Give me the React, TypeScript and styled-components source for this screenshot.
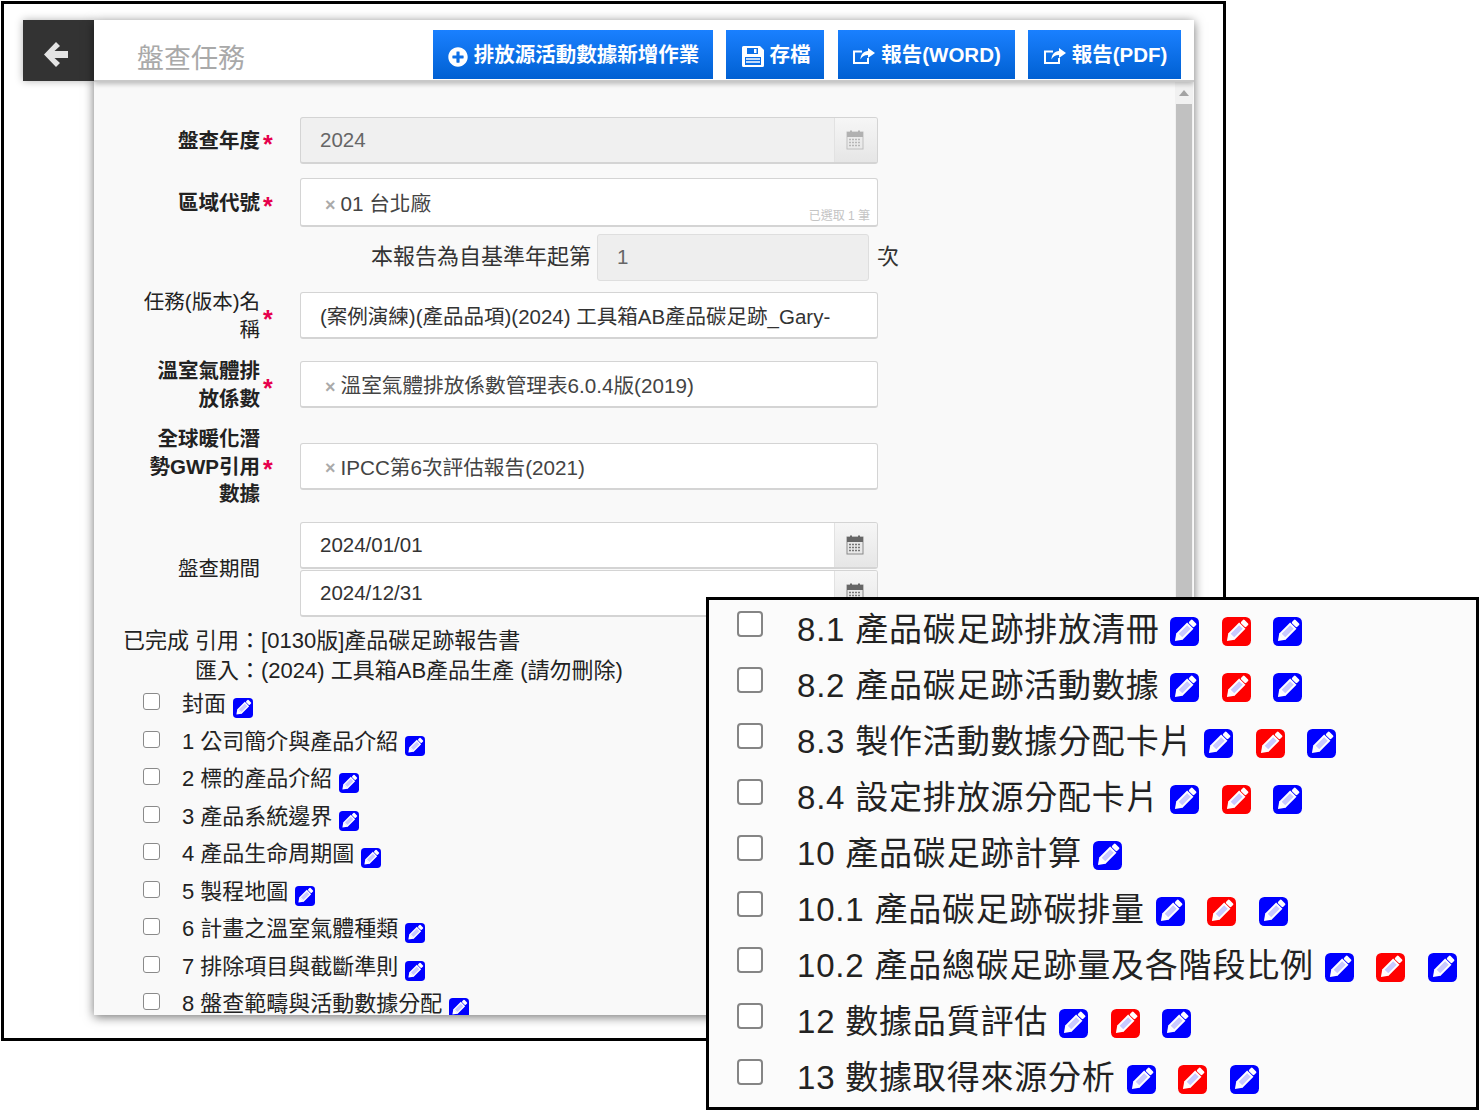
import { FaPlusCircle } from 'react-icons/fa';
import styled, { createGlobalStyle } from 'styled-components';

const GlobalStyle = createGlobalStyle`
html, body {
    margin: 0;
    padding: 0;
    background: #fff;
    font-family: "Liberation Sans", "Noto Sans CJK TC", sans-serif;
}
* { box-sizing: border-box; }
`

const PencilBox = ({ size, color = '#0000ff' }: { size: number; color?: string }) => (
    <Pencil $size={size} viewBox="0 0 24 24">
        <rect width="24" height="24" rx="4.5" fill={color} />
        <g transform="rotate(45 12 12)">
            <rect x="9" y="0.5" width="6" height="4" rx="1" fill="#fff" />
            <rect x="9.1" y="6" width="5.8" height="11.5" fill="#c9c9ff" stroke="#fff" strokeWidth="1.6" />
            <path d="M8.3 18h7.4l-3.7 5.2z" fill="#fff" />
        </g>
    </Pencil>
)

const CalendarIcon = ({ faded }: { faded?: boolean }) => (
    <svg width="18" height="20" viewBox="0 0 18 20" opacity={faded ? 0.45 : 1}>
        <rect x="1" y="2" width="16" height="17" fill="#e8e8e8" stroke="#8a8a8a" />
        <rect x="1" y="2" width="16" height="5" fill="#666" />
        <rect x="4" y="0.5" width="2" height="3" fill="#666" />
        <rect x="12" y="0.5" width="2" height="3" fill="#666" />
        <path d="M3 9.5h12M3 12.5h12M3 15.5h12" stroke="#777" strokeWidth="1.6" strokeDasharray="2 1" />
    </svg>
)

const BackArrow = () => (
    <svg width="24" height="25" viewBox="0 0 24 25">
        <path d="M12 0l4 4-5.5 5H24v7H10.500l5.500 5-4 4L0 12.500z" fill="#e4e4e4" />
    </svg>
)

const SaveIcon = () => (
    <ButtonGlyph width="22" height="21" viewBox="0 0 22 21">
        <path d="M0 1.500A1.500 1.500 0 0 1 1.500 0H18l4 4v15.500a1.500 1.500 0 0 1-1.500 1.500h-19A1.500 1.500 0 0 1 0 19.500z" fill="#fff" />
        <rect x="5" y="2" width="11" height="6" fill="#0a6fe8" />
        <rect x="12" y="3" width="2.500" height="4" fill="#fff" />
        <rect x="3" y="11" width="16" height="8" fill="#0a6fe8" />
        <path d="M4 13h14M4 16h14" stroke="#fff" strokeWidth="1.500" />
    </ButtonGlyph>
)

const ShareIcon = () => (
    <ButtonGlyph width="22" height="16" viewBox="0 0 22 16">
        <path d="M9 3.500H1V15h14V10" fill="none" stroke="#fff" strokeWidth="2" />
        <path d="M15 0l7 5-7 5V7c-4 0-6 1.500-7.500 4.500C7.500 6.500 10.500 3.500 15 3z" fill="#fff" />
    </ButtonGlyph>
)

const mainItems = [
    '封面',
    '1 公司簡介與產品介紹',
    '2 標的產品介紹',
    '3 產品系統邊界',
    '4 產品生命周期圖',
    '5 製程地圖',
    '6 計畫之溫室氣體種類',
    '7 排除項目與截斷準則',
    '8 盤查範疇與活動數據分配',
]

const zoomItems = [
    { text: '8.1 產品碳足跡排放清冊', full: true },
    { text: '8.2 產品碳足跡活動數據', full: true },
    { text: '8.3 製作活動數據分配卡片', full: true },
    { text: '8.4 設定排放源分配卡片', full: true },
    { text: '10 產品碳足跡計算', full: false },
    { text: '10.1 產品碳足跡碳排量', full: true },
    { text: '10.2 產品總碳足跡量及各階段比例', full: true },
    { text: '12 數據品質評估', full: true },
    { text: '13 數據取得來源分析', full: true },
]

const App = () => {
    return (
        <Page>
            <GlobalStyle />
            <Frame>
                <BackButton><BackArrow /></BackButton>
                <Panel>
                    <Header>
                        <Title>盤查任務</Title>
                        <Toolbar>
                            <ToolButton $width={280}><PlusGlyph><FaPlusCircle /></PlusGlyph>排放源活動數據新增作業</ToolButton>
                            <ToolButton $width={98}><SaveIcon />存檔</ToolButton>
                            <ToolButton $width={177}><ShareIcon />報告(WORD)</ToolButton>
                            <ToolButton $width={153}><ShareIcon />報告(PDF)</ToolButton>
                        </Toolbar>
                    </Header>
                    <Body>
                        <Content>
                            <FormRow $top={35}>
                                <Label>盤查年度</Label>
                                <Star>*</Star>
                                <Field $disabled>
                                    <FieldText $muted>2024</FieldText>
                                    <AddOn><CalendarIcon faded /></AddOn>
                                </Field>
                            </FormRow>
                            <FormRow $top={14}>
                                <Label>區域代號</Label>
                                <Star>*</Star>
                                <Field $height={49}>
                                    <Chip><ChipX>×</ChipX>01 台北廠</Chip>
                                    <Counter>已選取 1 筆</Counter>
                                </Field>
                            </FormRow>
                            <BaseYearRow>
                                <BaseYearLabel>本報告為自基準年起第</BaseYearLabel>
                                <BaseYearInput>1</BaseYearInput>
                                <BaseYearUnit>次</BaseYearUnit>
                            </BaseYearRow>
                            <FormRow $top={7}>
                                <Label $plain>任務(版本)名<br />稱</Label>
                                <Star>*</Star>
                                <Field>
                                    <FieldText $clip>(案例演練)(產品品項)(2024) 工具箱AB產品碳足跡_Gary-</FieldText>
                                </Field>
                            </FormRow>
                            <FormRow $top={14}>
                                <Label>溫室氣體排<br />放係數</Label>
                                <Star>*</Star>
                                <Field>
                                    <Chip><ChipX>×</ChipX>溫室氣體排放係數管理表6.0.4版(2019)</Chip>
                                </Field>
                            </FormRow>
                            <FormRow $top={13}>
                                <Label>全球暖化潛<br />勢GWP引用<br />數據</Label>
                                <Star>*</Star>
                                <Field>
                                    <Chip><ChipX>×</ChipX>IPCC第6次評估報告(2021)</Chip>
                                </Field>
                            </FormRow>
                            <FormRow $top={14}>
                                <Label $plain>盤查期間</Label>
                                <Star />
                                <DateStack>
                                    <Field>
                                        <FieldText>2024/01/01</FieldText>
                                        <AddOn><CalendarIcon /></AddOn>
                                    </Field>
                                    <Field>
                                        <FieldText>2024/12/31</FieldText>
                                        <AddOn><CalendarIcon /></AddOn>
                                    </Field>
                                </DateStack>
                            </FormRow>
                            <Notes>
                                <Note $indent={29}>已完成 引用：[0130版]產品碳足跡報告書</Note>
                                <Note $indent={101}>匯入：(2024) 工具箱AB產品生產 (請勿刪除)</Note>
                            </Notes>
                            <CheckList>
                                {mainItems.map((item) => (
                                    <CheckRow key={item}>
                                        <SmallCheck type="checkbox" />
                                        <RowText>{item}</RowText>
                                        <PencilBox size={20} />
                                    </CheckRow>
                                ))}
                            </CheckList>
                        </Content>
                        <ScrollBar>
                            <ScrollArrow />
                            <ScrollThumb />
                        </ScrollBar>
                    </Body>
                </Panel>
            </Frame>
            <ZoomBox>
                {zoomItems.map((item) => (
                    <ZoomRow key={item.text}>
                        <BigCheck type="checkbox" />
                        <ZoomText>{item.text}</ZoomText>
                        <PencilBox size={29} />
                        {item.full && <PencilBox size={29} color="#ff0000" />}
                        {item.full && <PencilBox size={29} />}
                    </ZoomRow>
                ))}
            </ZoomBox>
        </Page>
    )
}

export default App;

const Page = styled.div`
position: relative;
width: 1480px;
height: 1111px;
overflow: hidden;
padding: 1px 0 0 1px;
`
const Frame = styled.div`
display: flex;
align-items: flex-start;
width: 1225px;
height: 1040px;
padding: 16px 0 0 19px;
border: 3px solid #000;
background: #fff;
`
const BackButton = styled.div`
display: flex;
align-items: center;
justify-content: center;
flex: none;
width: 71px;
height: 61px;
padding: 7px 5px 0 0;
background: #333;
box-shadow: 0 0 8px rgba(0, 0, 0, 0.3);
`
const Panel = styled.div`
display: flex;
flex-direction: column;
width: 1100px;
height: 995px;
overflow: hidden;
background: #f9f9f9;
box-shadow: 0 2px 10px rgba(0, 0, 0, 0.55);
`
const Header = styled.div`
display: flex;
flex: none;
align-items: flex-start;
justify-content: space-between;
height: 62px;
padding: 10px 13px 0 43px;
background: #fff;
border-bottom: 2px solid #c8c8c8;
box-shadow: 0 2px 5px rgba(0, 0, 0, 0.25);
position: relative;
`
const Title = styled.div`
margin-top: 11px;
font-size: 27px;
line-height: 36px;
color: #a9a9a9;
`
const Toolbar = styled.div`
display: flex;
gap: 13.5px;
`
const ToolButton = styled.div<{ $width: number }>`
display: flex;
align-items: center;
justify-content: center;
gap: 6px;
width: ${(p) => p.$width}px;
height: 49px;
padding: 0 0 4px 2px;
background: linear-gradient(#1a80ff, #0060d2);
color: #fff;
font-size: 20.5px;
font-weight: 700;
white-space: nowrap;
`
const ButtonGlyph = styled.svg`
flex: none;
margin-top: 7px;
`
const PlusGlyph = styled.span`
display: flex;
flex: none;
margin-top: 8px;
font-size: 20px;
`
const Body = styled.div`
display: flex;
flex: 1;
min-height: 0;
`
const Content = styled.div`
flex: 1;
min-width: 0;
`
const FormRow = styled.div<{ $top: number }>`
display: grid;
grid-template-columns: 166px 40px 578px;
align-items: center;
margin-top: ${(p) => p.$top}px;
`
const Label = styled.div<{ $plain?: boolean }>`
text-align: right;
font-size: 20.5px;
line-height: 27.5px;
font-weight: ${(p) => (p.$plain ? 400 : 700)};
color: #222;
white-space: nowrap;
`
const Star = styled.div`
padding-left: 3px;
padding-top: 6px;
color: #e6004c;
font-size: 25px;
font-weight: 700;
line-height: 20px;
`
const Field = styled.div<{ $disabled?: boolean; $height?: number }>`
position: relative;
display: flex;
align-items: center;
height: ${(p) => p.$height ?? 47}px;
background: ${(p) => (p.$disabled ? '#f0f0f0' : '#fff')};
border: 1px solid #d4d4d4;
border-bottom-width: 2px;
border-radius: 3px;
overflow: hidden;
`
const FieldText = styled.div<{ $muted?: boolean; $clip?: boolean }>`
flex: 1;
min-width: 0;
padding: 0 ${(p) => (p.$clip ? 50 : 18)}px 0 19px;
font-size: 20.5px;
color: ${(p) => (p.$muted ? '#666' : '#333')};
white-space: nowrap;
overflow: hidden;
`
const AddOn = styled.div`
display: flex;
flex: none;
align-items: center;
justify-content: center;
align-self: stretch;
width: 43px;
padding-right: 2px;
background: linear-gradient(#f6f6f6, #e6e6e6);
border-left: 1px solid #e2e2e2;
`
const Chip = styled.div`
display: flex;
align-items: center;
padding-left: 24px;
font-size: 20.65px;
color: #444;
white-space: nowrap;
`
const ChipX = styled.span`
margin: 6px 5px 0 0;
font-size: 18px;
font-weight: 700;
color: #aaa;
`
const Counter = styled.span`
position: absolute;
right: 7px;
bottom: 2px;
font-size: 12px;
color: #c4c4c4;
`
const DateStack = styled.div`
display: flex;
flex-direction: column;
gap: 1px;
`
const BaseYearRow = styled.div`
display: flex;
align-items: center;
margin-top: 7px;
padding-left: 277px;
font-size: 22px;
color: #333;
`
const BaseYearLabel = styled.div`
width: 219px;
margin-bottom: 8px;
white-space: nowrap;
`
const BaseYearInput = styled.div`
display: flex;
align-items: center;
width: 272px;
height: 47px;
margin: 0 8px 0 7px;
padding: 0 0 2px 19px;
background: #eee;
border: 1px solid #dedede;
border-radius: 3px;
font-size: 20.5px;
color: #666;
`
const BaseYearUnit = styled.span`
margin-bottom: 8px;
`
const Notes = styled.div`
margin-top: 9px;
`
const Note = styled.div<{ $indent: number }>`
height: 30px;
line-height: 30px;
padding-left: ${(p) => p.$indent}px;
font-size: 22px;
color: #222;
white-space: nowrap;
`
const CheckList = styled.div`
margin-top: 2.5px;
padding-left: 49px;
`
const CheckRow = styled.div`
display: flex;
align-items: flex-start;
height: 37.5px;
font-size: 22px;
color: #222;
svg { margin: 10px 0 0 7px; }
`
const RowText = styled.span`
line-height: 31px;
white-space: nowrap;
`
const SmallCheck = styled.input`
appearance: none;
flex: none;
width: 17px;
height: 17px;
margin: 5px 22px 0 0;
background: #fff;
border: 1.5px solid #8a8a8a;
border-radius: 3px;
`
const ScrollBar = styled.div`
display: flex;
flex: none;
flex-direction: column;
align-items: center;
width: 18px;
margin-right: 1px;
background: #f1f1f1;
`
const ScrollArrow = styled.div`
margin: 8px 0 8px;
border-left: 5px solid transparent;
border-right: 5px solid transparent;
border-bottom: 6px solid #a3a3a3;
`
const ScrollThumb = styled.div`
flex: 1;
width: 16px;
background: #c1c1c1;
`
const ZoomBox = styled.div`
position: absolute;
left: 706px;
top: 597px;
width: 773px;
height: 513px;
padding: 0 0 0 28px;
border: 3px solid #000;
background: #fbfbfb;
`
const ZoomRow = styled.div`
display: flex;
align-items: flex-start;
height: 56px;
font-size: 33px;
color: #222;
svg { margin: 17px 22.5px 0 0; }
svg:first-of-type { margin-left: 11px; }
`
const ZoomText = styled.span`
line-height: 60px;
letter-spacing: 0.8px;
white-space: nowrap;
`
const BigCheck = styled.input`
appearance: none;
flex: none;
width: 26px;
height: 26px;
margin: 11px 34px 0 0;
background: #fff;
border: 2px solid #858585;
border-radius: 4px;
`
const Pencil = styled.svg<{ $size: number }>`
flex: none;
width: ${(p) => p.$size}px;
height: ${(p) => p.$size}px;
`
